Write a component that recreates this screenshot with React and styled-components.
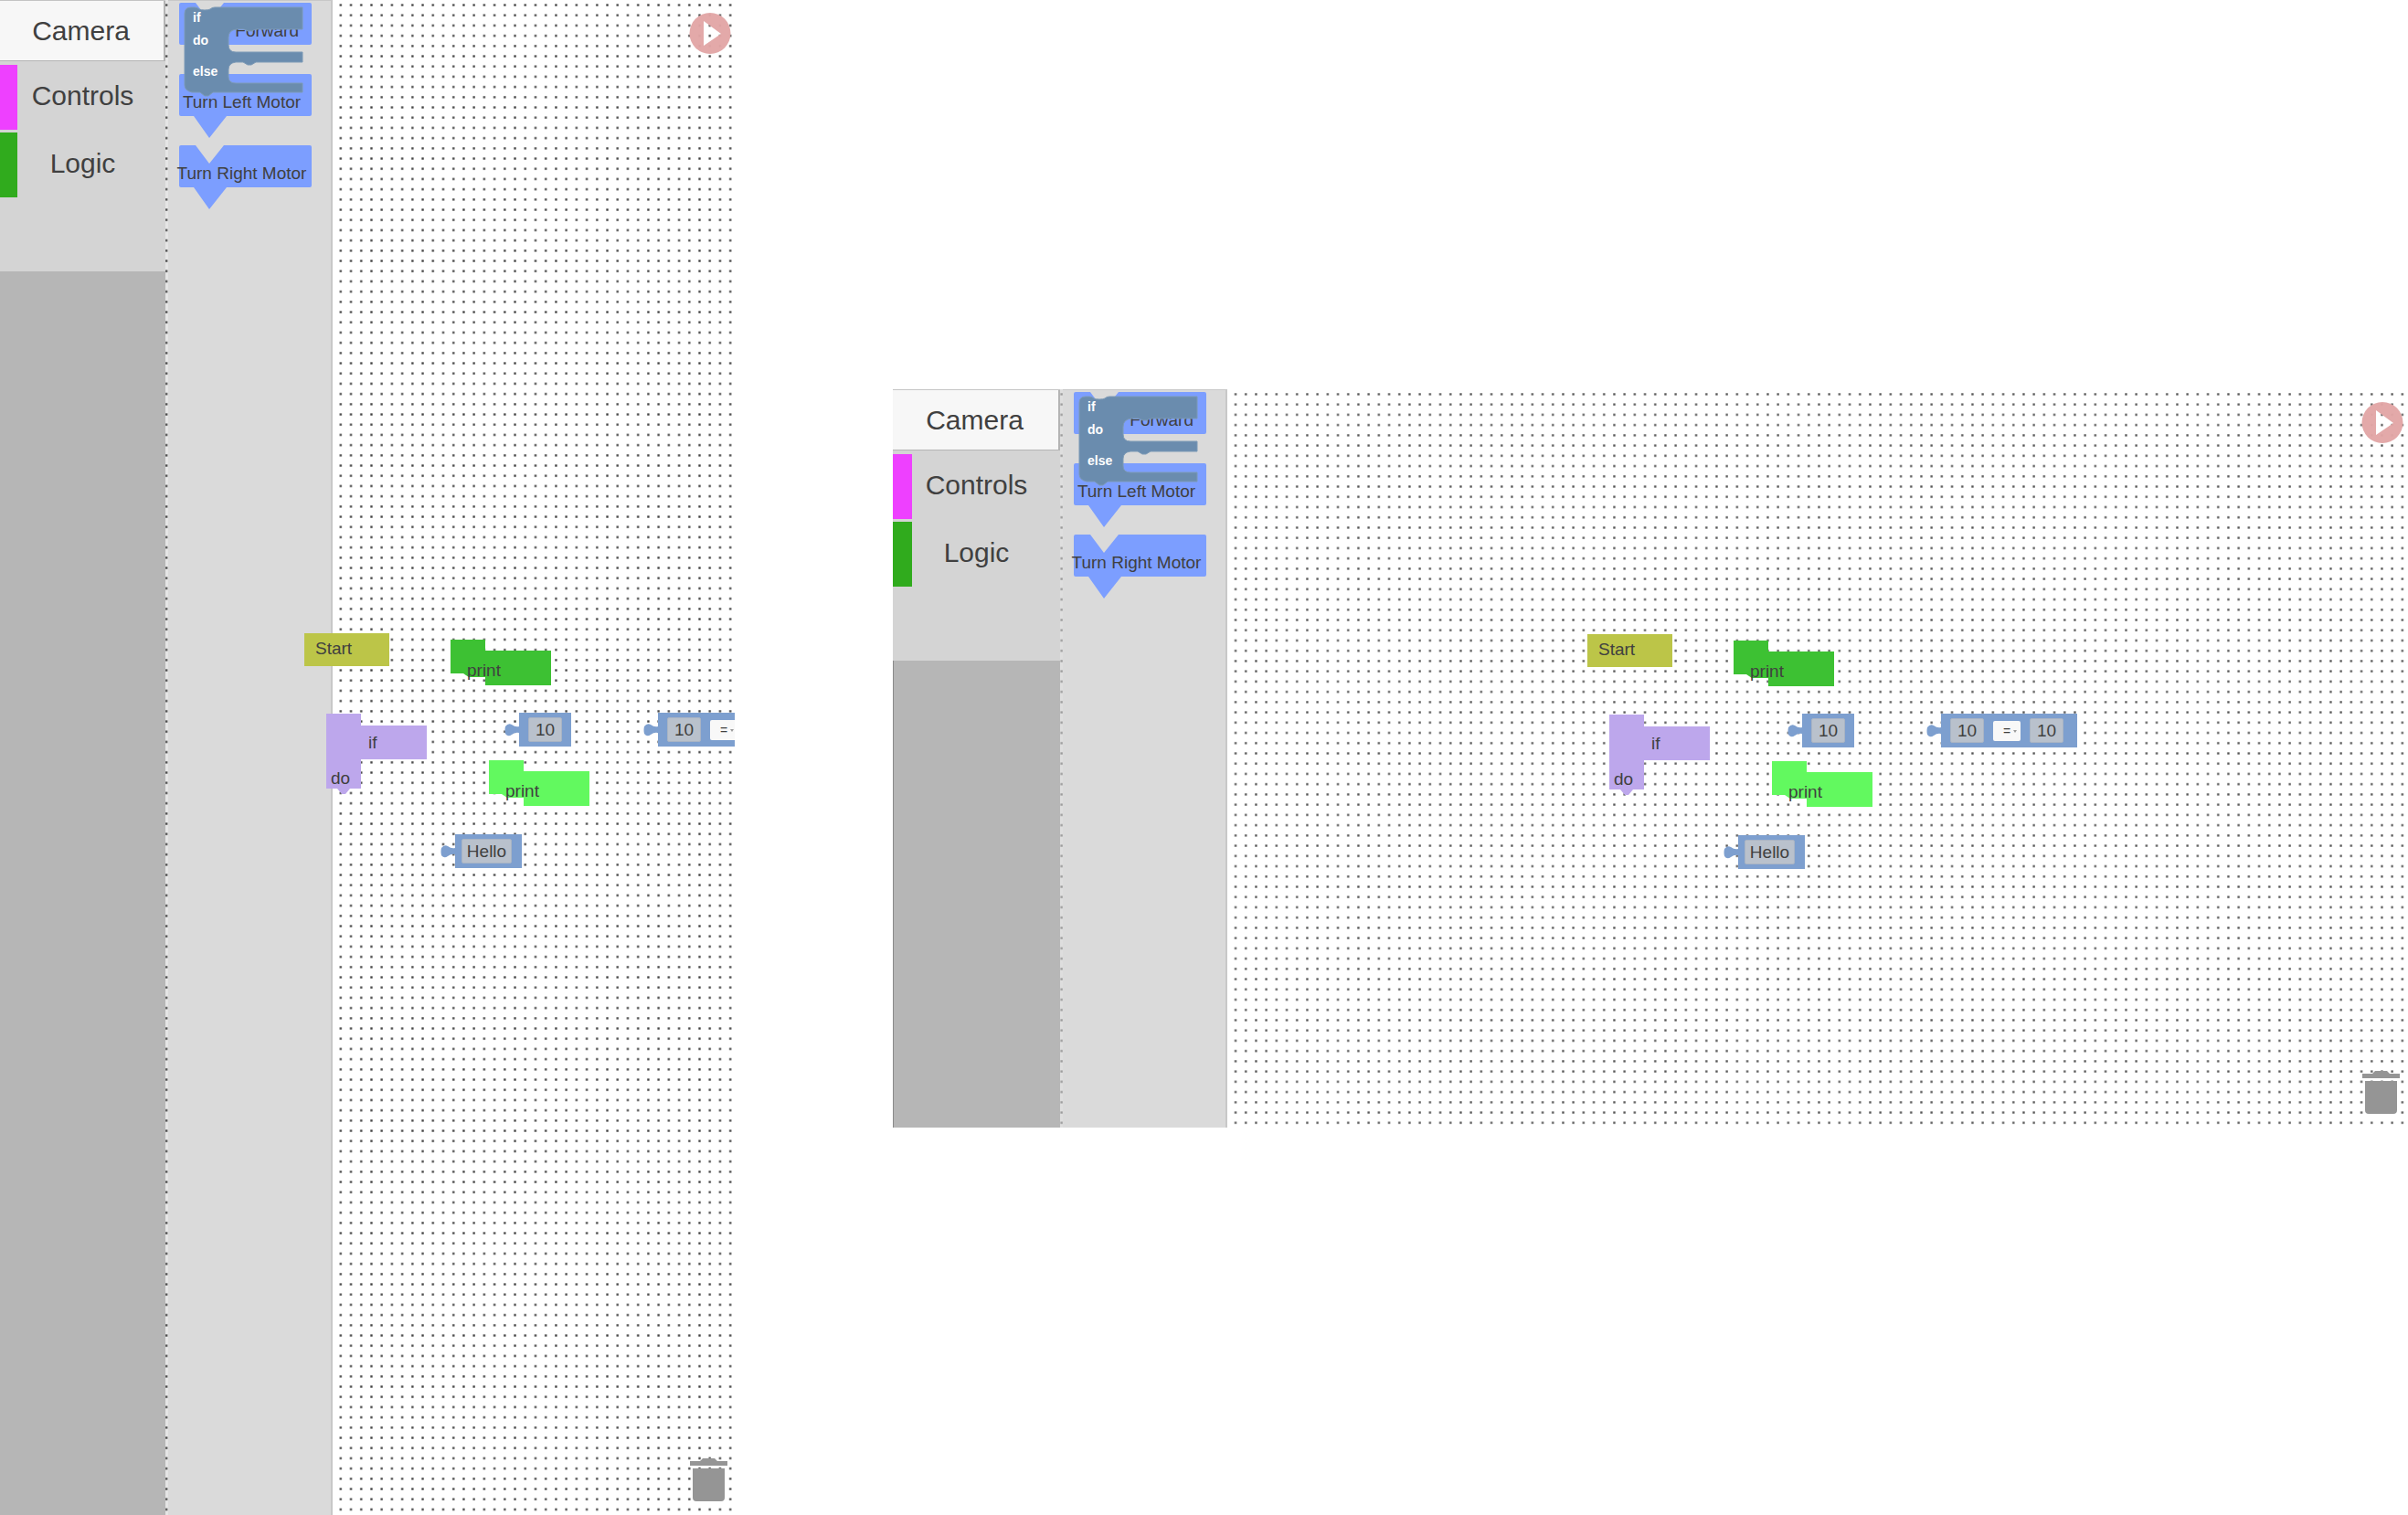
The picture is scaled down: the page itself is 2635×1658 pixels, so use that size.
import React, { useId } from "react";
import styled, { createGlobalStyle } from "styled-components";

const GlobalStyle = createGlobalStyle`
  *, *::before, *::after { box-sizing: border-box; }
  body {
    margin: 0;
    background: #fff;
    color: #404040;
    font-family: "Liberation Sans", Arial, sans-serif;
    font-size: 19px;
    line-height: 24px;
  }
  button, input, select { font: inherit; color: inherit; }
`;

const Page = styled.main`
  display: flex;
  align-items: center;
  gap: 173px;
  min-height: 100vh;
`;

const Workspace = styled.section`
  position: relative;
  display: flex;
  align-items: stretch;
  flex: ${(p) => p.$grow} 1 0;
  min-width: 0;
  overflow: hidden;
  ${(p) => (p.$tall ? "min-height: 100vh;" : "aspect-ratio: 1658 / 808; margin-top: 2px;")}
`;

const GridSvg = styled.svg`
  position: absolute;
  inset: 0;
  width: 100%;
  height: 100%;
`;

const Panels = styled.div`
  position: relative;
  display: flex;
  gap: 3px;
  background: ${(p) => (p.$framed ? "rgba(200, 200, 200, 0.6)" : "rgba(0, 0, 0, 0.1)")};
`;

const Toolbox = styled.nav`
  display: flex;
  flex-direction: column;
  width: ${(p) => (p.$framed ? 183 : 181)}px;
  background: #b6b6b6;
  border-top: 1px solid #c4c4c4;
  box-shadow: ${(p) => (p.$framed ? "inset 1px 0 #8a8a8a" : "none")};
`;

const Categories = styled.div`
  display: flex;
  flex-direction: column;
  gap: 3px;
  padding-bottom: 81px;
  background: #d4d4d4;
`;

const Category = styled.button`
  height: 71px;
  padding: 0 0 3px;
  border: 0;
  background: none;
  box-shadow: inset ${(p) => (p.$framed ? 21 : 19)}px 0 ${(p) => p.$color};
  font-size: 30px;
  text-align: center;
`;

const ActiveCategory = styled(Category)`
  height: 66px;
  margin-bottom: 1px;
  padding: 0 2px 0 0;
  border: solid #b4b4b4;
  border-width: 0 2px 1px 0;
  background: #f7f7f7;
  box-shadow: none;
`;

const Flyout = styled.div`
  position: relative;
  display: flex;
  flex-direction: column;
  gap: 8px;
  width: 180px;
  padding: 2px 0 0 12px;
  background: #dadada;
  border-top: 1px solid #c8c8c8;
  border-right: 2px solid #c8c8c8;
`;

const Stack = styled.div`
  display: grid;
  justify-content: start;

  > * {
    grid-area: 1 / 1;
  }
`;

const FlyoutItem = styled(Stack)`
  grid-template-columns: 145px;
  height: 70px;
`;

const FlyoutText = styled.span`
  justify-self: ${(p) => (p.$end ? "end" : "center")};
  padding: 19px ${(p) => (p.$end ? 22 : 8)}px 0 0;
  margin: 0 -8px;
  white-space: nowrap;
`;

const Shape = styled.svg`
  display: block;
  overflow: visible;
`;

const DraggedBlock = styled(Stack)`
  position: absolute;
  top: 6px;
  left: 17px;
`;

const BranchLabels = styled.div`
  display: grid;
  align-content: start;
  grid-template-rows: 25px 34px 16px;
  padding: 4px 10px 0;
  color: #fff;
  font-size: 14px;
  font-weight: 700;
  line-height: 16px;
`;

const Blocks = styled.div`
  position: absolute;
  top: 50%;
  left: 50%;
`;

const Placed = styled.div`
  position: absolute;
  left: ${(p) => p.$x}px;
  top: ${(p) => p.$y}px;
`;

const StartBlock = styled.div`
  width: 93px;
  height: 36px;
  padding: 5px 12px;
  background: #bcc548;
`;

const PrintLabel = styled.span`
  padding: 22px 0 0 18px;
`;

const IfLabels = styled.div`
  display: grid;
  align-content: start;
  grid-template-rows: 39px 24px;
  padding: 20px 0 0 5px;
`;

const Condition = styled.span`
  padding-left: 41px;
`;

const ValueRow = styled.div`
  display: flex;
  align-items: center;
`;

const ValueBlock = styled.div`
  display: flex;
  align-items: center;
  gap: 10px;
  height: 37px;
  padding: 0 ${(p) => p.$right}px 0 ${(p) => p.$left}px;
  background: #7d9fcf;
`;

const Plug = styled.svg`
  display: block;
  flex: none;
`;

const Field = styled.input`
  width: ${(p) => p.$width}px;
  height: 27px;
  padding: 0;
  border: 1px solid #a9b4c4;
  border-radius: 2px;
  background: #b9c1cc;
  text-align: center;
`;

const Operator = styled.div`
  position: relative;
  display: flex;
`;

const OperatorSelect = styled.select`
  appearance: none;
  width: 30px;
  height: 22px;
  padding: 0 0 0 11px;
  border: 0;
  border-radius: 2px;
  background: #f8f8f8;
  font-size: 14px;
  line-height: 20px;
`;

const Caret = styled.svg`
  position: absolute;
  right: 4px;
  top: 10px;
  pointer-events: none;
`;

const IconButton = styled.button`
  position: absolute;
  right: ${(p) => p.$right}px;
  ${(p) => p.$edge}: ${(p) => p.$inset}px;
  display: block;
  padding: 0;
  border: 0;
  background: none;
  line-height: 0;
`;

function DotGrid({ pitch, phase, color }) {
  const id = useId();
  return (
    <GridSvg aria-hidden="true">
      <defs>
        <pattern
          id={id}
          patternUnits="userSpaceOnUse"
          width={pitch[0]}
          height={pitch[1]}
          x={phase[0] - 5}
          y={phase[1] - 5}
        >
          <rect x="4" y="4" width="2.3" height="2.3" fill={color} />
        </pattern>
      </defs>
      <rect width="100%" height="100%" fill={`url(#${id})`} />
    </GridSvg>
  );
}

function MotorBlock({ text, end }) {
  return (
    <FlyoutItem>
      <Shape width="145" height="70" aria-hidden="true">
        <path
          d="M2 0H18L33 20L49 0H143Q145 0 145 2V44Q145 46 143 46H52L33 70L16 46H2Q0 46 0 44V2Q0 0 2 0Z"
          fill="#7c9eff"
        />
      </Shape>
      <FlyoutText $end={end}>{text}</FlyoutText>
    </FlyoutItem>
  );
}

function BranchBlock() {
  return (
    <DraggedBlock>
      <Shape width="131" height="98" aria-hidden="true">
        <path
          d="M1 8Q1 1 8 1H12Q15 1 17 3Q19 4 23 4Q27 4 29 3Q31 1 34 1H130V25H80Q77 25 75 27H70Q68 25 65 25H58Q49 26 49 34V42Q49 50 57 50H130V61H79L74 64H70L65 61H57Q49 62 49 69V77Q49 84 57 84H130V94H32L27 98H23L18 94H9Q1 92 1 86Z"
          fill="#6a8cae"
          stroke="#7d9ab6"
          strokeWidth="1"
        />
      </Shape>
      <BranchLabels>
        <span>if</span>
        <span>do</span>
        <span>else</span>
      </BranchLabels>
    </DraggedBlock>
  );
}

function PrintBlock({ color }) {
  return (
    <Stack>
      <Shape width="110" height="50" aria-hidden="true">
        <path d="M0 0H38V12H110V50H38V41H20L14 37H0Z" fill={color} />
      </Shape>
      <PrintLabel>print</PrintLabel>
    </Stack>
  );
}

function IfBlock() {
  return (
    <Stack>
      <Shape width="110" height="89" aria-hidden="true">
        <path d="M0 0H38V13H110V50H38V82H26L21 88H17L12 82H0Z" fill="#bda7ec" />
      </Shape>
      <IfLabels>
        <Condition>if</Condition>
        <span>do</span>
      </IfLabels>
    </Stack>
  );
}

function Value({ left, right, children }) {
  return (
    <ValueRow>
      <Plug width="16" height="14" aria-hidden="true">
        <path d="M16 3Q12 4 8 1Q4 -1 1 3Q0 7 1 11Q4 15 8 12Q12 9 16 10Z" fill="#7d9fcf" />
      </Plug>
      <ValueBlock $left={left} $right={right}>
        {children}
      </ValueBlock>
    </ValueRow>
  );
}

function Comparison() {
  return (
    <Value left={10} right={15}>
      <Field $width={37} defaultValue="10" aria-label="Left operand" />
      <Operator>
        <OperatorSelect defaultValue="=" aria-label="Comparison">
          <option>=</option>
          <option>≠</option>
        </OperatorSelect>
        <Caret width="4" height="3" aria-hidden="true">
          <path d="M0 0H4L2 3Z" fill="#999" />
        </Caret>
      </Operator>
      <Field $width={37} defaultValue="10" aria-label="Right operand" />
    </Value>
  );
}

const program = [
  { x: -69, y: -136, block: <StartBlock>Start</StartBlock> },
  { x: 91, y: -129, block: <PrintBlock color="#3dc133" /> },
  { x: -45, y: -48, block: <IfBlock /> },
  {
    x: 150,
    y: -49,
    block: (
      <Value left={10} right={10}>
        <Field $width={37} defaultValue="10" aria-label="Number" />
      </Value>
    ),
  },
  { x: 302, y: -49, block: <Comparison /> },
  { x: 133, y: 3, block: <PrintBlock color="#62f95f" /> },
  {
    x: 80,
    y: 84,
    block: (
      <Value left={7} right={11}>
        <Field $width={55} defaultValue="Hello" aria-label="Text" />
      </Value>
    ),
  },
];

function Editor({ grow, tall, framed, pitch, phase, dots, edge }) {
  return (
    <Workspace $grow={grow} $tall={tall}>
      <DotGrid pitch={pitch} phase={phase} color={dots} />
      <Panels $framed={framed}>
        <Toolbox $framed={framed}>
          <Categories>
            <ActiveCategory>Camera</ActiveCategory>
            <Category $framed={framed} $color="#ee40ff">Controls</Category>
            <Category $framed={framed} $color="#30ab1d">Logic</Category>
          </Categories>
        </Toolbox>
        <Flyout>
          <MotorBlock text="Forward" end />
          <MotorBlock text="Turn Left Motor" />
          <MotorBlock text="Turn Right Motor" />
          <BranchBlock />
        </Flyout>
      </Panels>
      <Blocks>
        {program.map(({ x, y, block }) => (
          <Placed key={`${x},${y}`} $x={x} $y={y}>
            {block}
          </Placed>
        ))}
      </Blocks>
      <IconButton $right={edge} $edge="top" $inset={14} aria-label="Run">
        <svg width="46" height="46" aria-hidden="true">
          <path
            d="M23 0A22.5 22.5 0 1 1 23 45A22.5 22.5 0 1 1 23 0ZM16 9V36L35 23Z"
            fill="#e2a5a5"
            fillOpacity="0.96"
            fillRule="evenodd"
          />
        </svg>
      </IconButton>
      <IconButton $right={edge + 4} $edge="bottom" $inset={15} aria-label="Delete">
        <svg width="41" height="47" aria-hidden="true">
          <path
            d="M0 3H11L14 0H27L30 3H41V8H0ZM3 11H38V43Q38 47 34 47H7Q3 47 3 43Z"
            fill="#959595"
          />
        </svg>
      </IconButton>
    </Workspace>
  );
}

export default function App() {
  return (
    <>
      <GlobalStyle />
      <Page>
        <Editor grow={804} tall pitch={[11.22, 11.2]} phase={[2.4, 5.4]} dots="#3c3c3c" edge={4} />
        <Editor grow={1658} framed pitch={[11.2, 11.23]} phase={[5.3, 5.3]} dots="#505050" edge={5} />
      </Page>
    </>
  );
}
